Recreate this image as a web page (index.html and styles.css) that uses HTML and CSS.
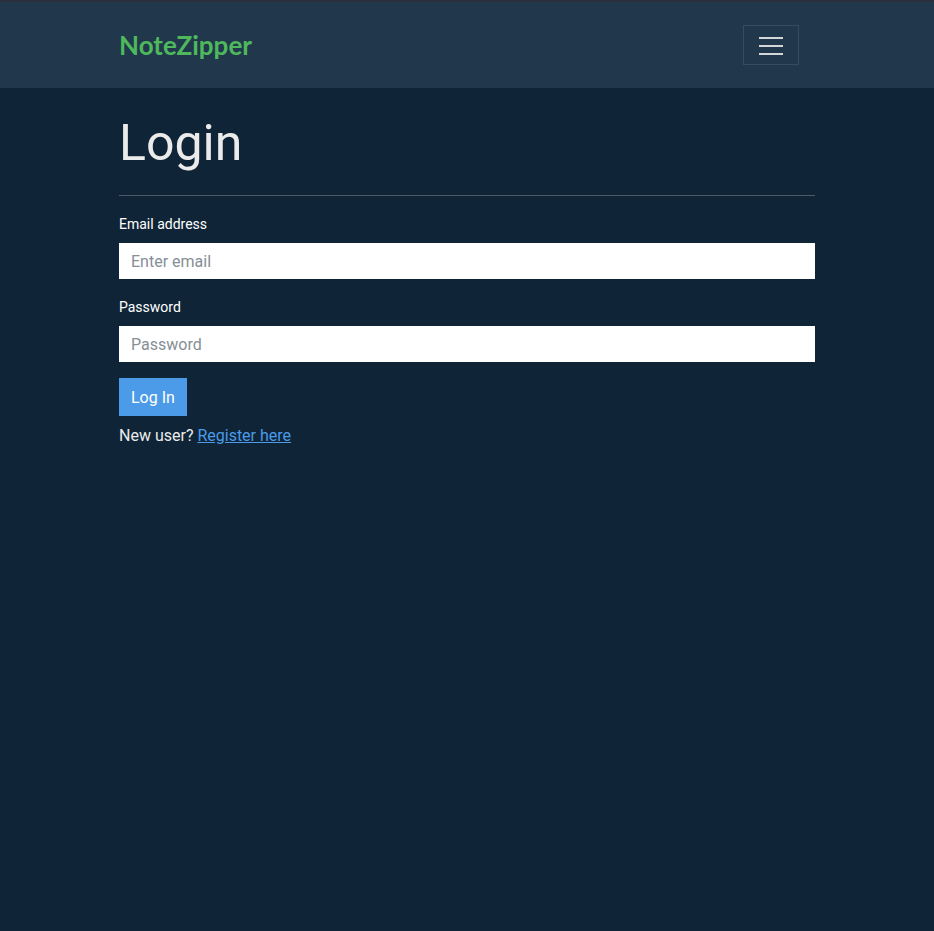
FILE: index.html
```html
<!DOCTYPE html>
<html lang="en">
<head>
<meta charset="utf-8">
<title>NoteZipper - Login</title>
<link rel="stylesheet" href="styles.css">
</head>
<body>
<header class="navbar">
  <div class="container nav-inner">
    <a class="brand" href="#">NoteZipper</a>
    <button class="toggler" type="button" aria-label="Toggle navigation">
      <svg width="24" height="20" viewBox="0 0 24 20"><path d="M0 3h24M0 11h24M0 19h24" stroke="#d3d6d9" stroke-width="2"/></svg>
    </button>
  </div>
</header>
<main class="container main">
  <h1 class="title">Login</h1>
  <hr class="divider">
  <form class="form">
    <div class="group">
      <label class="label" for="email">Email address</label>
      <input class="input" id="email" type="email" placeholder="Enter email">
    </div>
    <div class="group">
      <label class="label" for="pw">Password</label>
      <input class="input" id="pw" type="password" placeholder="Password">
    </div>
    <button class="btn" type="submit">Log In</button>
  </form>
  <p class="register">New user? <a href="#">Register here</a></p>
</main>
</body>
</html>
```
FILE: styles.css
```css
* { box-sizing: border-box; }
html, body { margin: 0; padding: 0; }
body {
  background: #0f2537;
  color: #ebebeb;
  font-family: Roboto, "Liberation Sans", sans-serif;
  font-size: 16px;
  line-height: 1.5;
  min-height: 100vh;
}
.container {
  width: 696px;
  margin: 0 auto;
}
.navbar {
  background: #20374c;
  border-top: 2px solid #2b2e3d;
  height: 88px;
}
.nav-inner {
  display: flex;
  align-items: center;
  justify-content: space-between;
  height: 86px;
  padding-right: 16px;
}
.brand {
  font-family: Lato, "Open Sans", sans-serif;
  font-weight: 700;
  font-size: 26px;
  line-height: 1.2;
  color: #4fb85c;
  text-decoration: none;
  margin-top: 2px;
}
.toggler {
  width: 56px;
  height: 40px;
  background: transparent;
  border: 1px solid rgba(255,255,255,0.1);
  border-radius: 0;
  display: flex;
  align-items: center;
  justify-content: center;
  padding: 0;
}
.main { padding-top: 25px; }
.title {
  margin: 0;
  font-size: 50px;
  font-weight: 400;
  line-height: 1.2;
  color: #ebebeb;
}
.divider {
  margin: 22px 0 17px;
  border: 0;
  border-top: 1px solid rgba(255,255,255,0.25);
}
.group { margin-bottom: 17px; }
.group:last-of-type { margin-bottom: 16px; }
.label {
  display: block;
  font-size: 14px;
  line-height: 22px;
  margin-bottom: 8px;
  color: #ffffff;
}
.input {
  display: block;
  width: 100%;
  height: 36px;
  border: 0;
  border-radius: 0;
  background: #fff;
  padding: 0 12px;
  font-family: Roboto, "Liberation Sans", sans-serif;
  font-size: 16px;
  color: #495057;
}
.input::placeholder { color: #868e96; }
.btn {
  display: block;
  height: 38px;
  padding: 0 12px;
  border: 0;
  border-radius: 0;
  background: #4c9be8;
  color: #fff;
  font-family: Roboto, "Liberation Sans", sans-serif;
  font-size: 16px;
}
.register {
  margin: 8px 0 0;
  font-size: 16px;
  line-height: 24px;
}
.register a { color: #4c9be8; text-decoration: underline; }
```
